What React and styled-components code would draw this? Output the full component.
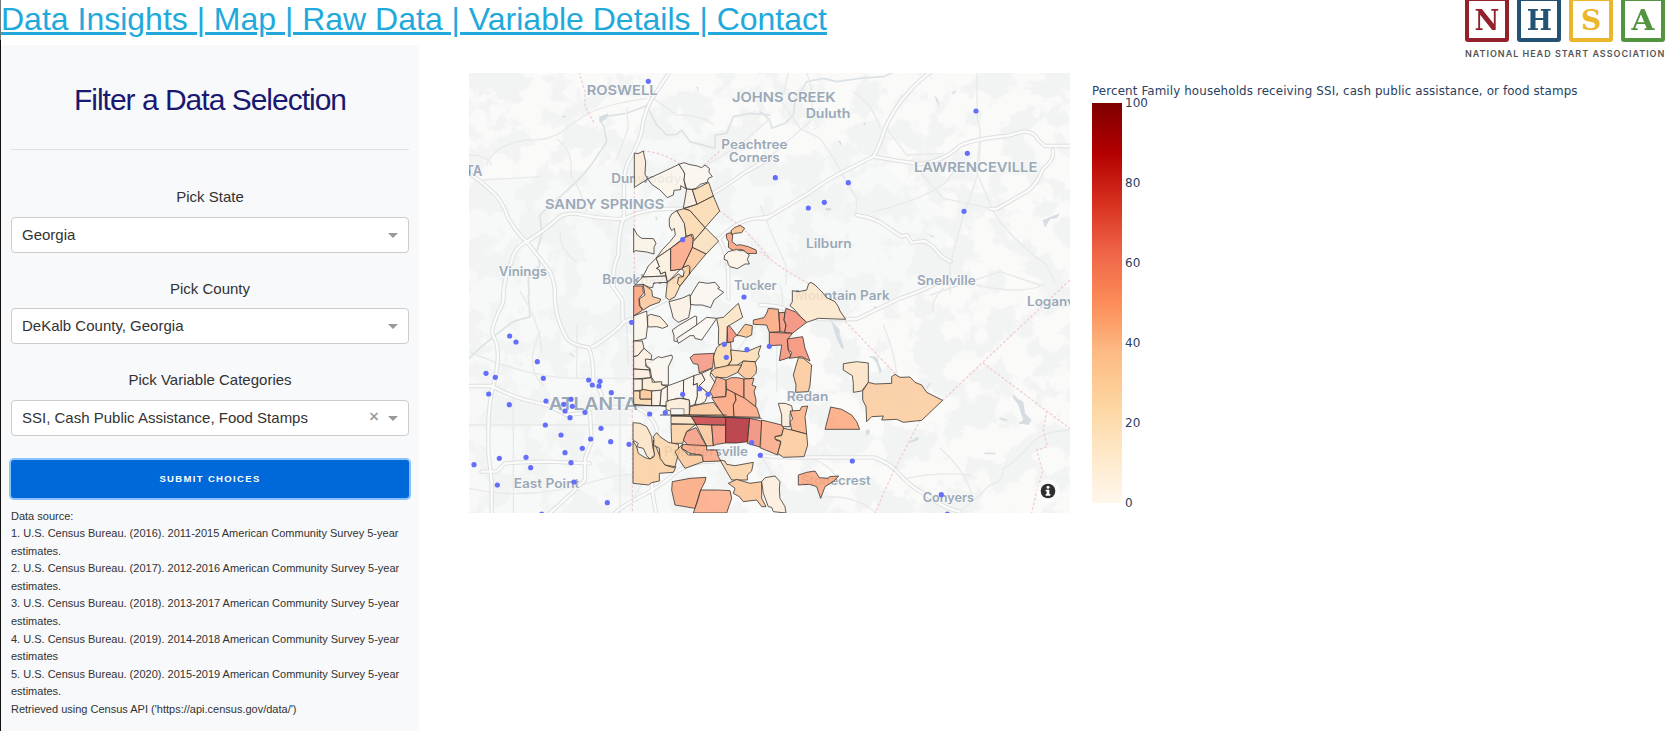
import React from "react";
import styled, { createGlobalStyle } from "styled-components";

const GlobalStyle = createGlobalStyle`
  * { box-sizing: border-box; }
  html, body { margin: 0; padding: 0; background: #fff; overflow: hidden; }
  body { font-family: "Liberation Sans", Arial, sans-serif; color: #323232; }
`;

const Page = styled.div`
  width: 1671px;
  height: 731px;
  display: flex;
  overflow: hidden;
`;
const Edge = styled.div`
  width: 1px;
  flex: none;
  background: linear-gradient(#777 0 40px, #111 40px);
`;
const Content = styled.div`
  flex: 1;
  display: flex;
  flex-direction: column;
`;
const Header = styled.header`
  height: 45px;
  flex: none;
  display: flex;
  justify-content: space-between;
  align-items: flex-start;
  padding-right: 6px;
`;
const Nav = styled.a`
  color: #22a9dc;
  font-size: 32px;
  line-height: 39px;
  white-space: pre;
  text-decoration: underline;
  text-decoration-thickness: 3px;
  text-underline-offset: 2px;
`;
const Brand = styled.div`
  width: 200px;
  display: flex;
  flex-direction: column;
`;
const Blocks = styled.div`
  display: flex;
  justify-content: space-between;
  height: 42px;
`;
const Block = styled.div`
  width: 44px;
  height: 42px;
  border: 4px solid ${(p) => p.$color};
  border-top-width: 1px;
  border-radius: 0 0 3px 3px;
  color: ${(p) => p.$color};
  font: bold 28px/39px "DejaVu Serif", serif;
  display: flex;
  justify-content: center;
`;
const Letter = styled.span`
  transform: scaleX(${(p) => p.$scale});
`;
const BrandName = styled.div`
  margin-top: 5px;
  font: 600 9px/13px Inter, sans-serif;
  letter-spacing: 0.98px;
  color: #555;
  white-space: nowrap;
`;
const Main = styled.main`
  display: flex;
  flex: 1;
  align-items: flex-start;
`;
const Sidebar = styled.aside`
  width: 418px;
  height: 686px;
  flex: none;
  background: #f8f9fb;
  padding: 0 10px;
`;
const Title = styled.h2`
  margin: 0;
  padding-top: 35px;
  height: 104px;
  font-size: 30px;
  line-height: 40px;
  font-weight: 400;
  letter-spacing: -1px;
  text-align: center;
  color: #191970;
`;
const Rule = styled.hr`
  margin: 0 0 36px;
  border: 0;
  border-top: 1px solid #dfe1e4;
`;
const Field = styled.div`
  height: ${(p) => p.$height}px;
`;
const Label = styled.div`
  height: ${(p) => p.$height}px;
  font-size: 15px;
  line-height: ${(p) => p.$line}px;
  text-align: center;
`;
const Select = styled.div`
  height: 36px;
  border: 1px solid #ccc;
  border-radius: 4px;
  background: #fff;
  padding: 0 10px;
  display: flex;
  align-items: center;
  gap: 9px;
  font-size: 15px;
  color: #333;
`;
const Value = styled.span`
  flex: 1;
  height: 34px;
  line-height: 33px;
  white-space: nowrap;
`;
const Clear = styled.span`
  font-size: 17px;
  line-height: 20px;
  color: #999;
  -webkit-text-stroke: 0.4px #999;
  transform: translateY(-1px);
`;
const Arrow = styled.span`
  border: 5px solid transparent;
  border-top-color: #999;
  border-bottom-width: 0;
`;
const Submit = styled.button`
  width: 100%;
  height: 38px;
  display: block;
  border: 0;
  border-radius: 3px;
  box-shadow: 0 0 0 2px #8cc2fb;
  background: #0069d9;
  color: #fff;
  font: 600 9.5px/38px "Liberation Sans", Arial, sans-serif;
  letter-spacing: 1.35px;
  padding: 0;
`;
const Sources = styled.div`
  margin-top: 9.5px;
  font-size: 11px;
  line-height: 17.6px;
`;
const MapBox = styled.div`
  margin: 28px 0 0 50px;
  width: 601px;
  height: 440px;
  flex: none;
  svg { display: block; }
`;
const Legend = styled.section`
  margin: 36px 0 0 22px;
  font: 12px/20px "DejaVu Sans", Verdana, sans-serif;
  color: #2a3f5f;
`;
const LegendTitle = styled.div`
  height: 22px;
  line-height: 20px;
  white-space: nowrap;
  font-size: 11.9px;
  letter-spacing: 0.11px;
`;
const Scale = styled.div`
  display: flex;
  gap: 3px;
`;
const Ramp = styled.div`
  width: 30px;
  height: 400px;
  background: linear-gradient(to top, #fff7ec, #fee8c8 12.5%, #fdd49e 25%, #fdbb84 37.5%, #fc8d59 50%, #ef6548 62.5%, #d7301f 75%, #b30000 87.5%, #7f0000);
`;
const Ticks = styled.div`
  height: 420px;
  margin-top: -10px;
  display: flex;
  flex-direction: column;
  justify-content: space-between;
`;

/* The map is drawn in thirds of a pixel, split in four tiles. */
const TILES = { nw: [0, 0], ne: [900, 0], sw: [0, 660], se: [900, 660], core: [480, 225] };
const shift = (t) => `translate(${TILES[t][0]} ${TILES[t][1]})`;

const TRACTS = {
  nw: [
    ["#fdebd6", "523,264 534,266 550,258 553,274 557,290 555,328 563,342 523,367"],
    ["#fcf4ea", "563,342 600,325 657,298 670,315 675,330 672,345 677,371 662,362 662,374 642,376 640,390 622,398 600,375 575,358"],
    ["#fcf6ef", "657,298 672,293 690,299 712,303 725,308 735,300 748,310 747,322 757,335 745,340 742,352 720,358 708,370 695,373 680,372 672,345 674,325"],
    ["#fbf0e3", "680,372 697,374 711,418 670,430"],
    ["#fbdcb2", "697,374 708,372 746,352 760,393 711,418"],
    ["#fbdab0", "711,418 760,393 779,438 735,488 710,460 690,437 672,431"],
    ["#fbd8ae", "672,431 690,437 710,460 735,488 703,528 698,508 678,514 673,478 650,437"],
  ],
  core: [
    ["#fcf0e0", "170,212 155,222 148,235 148,258 155,272 163,265 166,285 150,305 128,328 108,355 152,325 198,288 193,250"],
    ["#fbe0bd", "256,263 296,303 258,342 217,322 219,305"],
    ["#fbc698", "217,322 258,342 207,403 205,378 190,382 186,387"],
    ["#fcefdd", "108,355 152,325 152,392 182,387 142,427 136,396 122,402 118,390 109,385 118,380"],
    ["#fcf4e9", "108,355 118,380 109,385 118,390 122,402 136,396 137,408 68,411 85,378"],
    ["#fcf4ea", "68,411 137,408 142,427 101,429 98,443 86,441 69,433 44,435"],
    ["#fbdcb3", "142,427 175,402 188,410 205,378 210,400 180,438 165,470 148,480 137,472"],
    ["#fbd4a4", "186,387 190,382 205,376 210,380 208,402 180,438 172,430 176,412 190,410 192,395"],
    ["#fba682", "152,325 200,290 213,284 219,298 217,322 186,387 152,392"],
    ["#fba07a", "319,282 333,278 338,288 336,305 350,316 360,314 385,320 408,330 410,340 380,341 370,330 358,328 345,335 325,322 326,305 320,295"],
    ["#fbc08f", "333,272 343,263 360,256 374,265 365,278 345,280 336,284"],
    ["#fcf3e6", "325,335 350,328 358,332 372,332 388,345 382,358 388,372 375,372 352,386 330,380 325,374 322,362 312,358 314,346"],
    ["#fcf2e4", "41,265 52,285 65,295 100,296 108,310 102,322 102,342 80,336 45,332 41,337"],
  ],
  sw: [
    ["#fba17c", "521,3 548,3 550,25 537,40 538,62 548,75 521,93"],
    ["#fbc79c", "549,-3 575,15 578,35 602,42 598,52 570,62 550,75 540,62 538,42 555,30"],
    ["#fcf6f0", "717,-9 742,-5 765,-8 779,8 773,10 791,22 762,45 752,68 727,60 705,60 692,58 690,35 705,10"],
    ["#fcf1e4", "627,50 665,40 690,29 692,65 686,98 655,112 640,100"],
    ["#fcf4ea", "521,93 560,78 563,120 558,160 540,165 521,168"],
    ["#fdeeda", "563,120 563,92 572,88 600,95 612,108 624,123 608,130 590,125 565,126"],
    ["#fdeedd", "521,168 547,168 552,190 533,212 521,215"],
    ["#fdefdf", "521,215 533,212 552,190 575,210 572,232 558,236 557,244 575,255 521,252"],
    ["#fdeedd", "521,252 568,255 572,278 521,282"],
    ["#fdf0e2", "521,282 547,282 547,315 521,318"],
    ["#fcf6ef", "558,240 556,222 580,225 595,215 605,218 635,210 638,218 625,245 625,300 605,300 600,292 585,292 575,278 570,250"],
    ["#fdebd2", "547,315 547,282 575,278 577,292 605,290 605,300 620,303 600,318 575,318"],
    ["#fbdab0", "521,318 540,318 540,342 575,342 575,362 521,358"],
    ["#fbc594", "540,318 550,313 575,318 575,342 540,342"],
    ["#fcf2e5", "575,318 604,315 600,362 575,362"],
    ["#fcf4ea", "604,315 622,303 625,350 618,365 600,362"],
    ["#fcf5ec", "622,303 671,285 670,340 650,340 622,350"],
    ["#fcf6ef", "671,285 702,272 700,300 712,295 712,335 705,358 690,364 688,345 670,340"],
    ["#fdf1e3", "702,272 725,265 735,285 718,302 745,325 735,350 720,358 705,358 712,335 712,295 700,300"],
    ["#fcf3e6", "725,265 757,250 750,270 770,300 750,320 745,325 718,302 735,285"],
    ["#fdebd6", "618,350 630,345 660,340 688,345 688,390 635,392 632,378 618,374"],
    ["#fcf6ef", "637,135 655,122 705,93 710,95 710,120 662,155 650,170 642,168 642,152"],
    ["#fcf7f1", "650,160 710,120 740,97 770,100 755,122 725,165 705,160 702,152 690,152 675,162 655,175"],
    ["#fbe3c2", "770,100 790,97 835,55 848,97 802,125 800,175 785,180 775,178 776,130"],
    ["#f58c76", "802,125 808,122 830,150 820,160 820,170 803,172"],
    ["#fbc28f", "835,145 855,118 877,122 875,150 860,157 840,152 830,152"],
    ["#fbd8ab", "770,188 785,175 812,172 815,225 800,245 765,250 760,215"],
    ["#fbdcb3", "812,195 860,200 903,182 895,205 898,215 885,232 850,228 830,242 805,242 815,225"],
    ["#fbc495", "850,228 885,230 890,250 888,265 870,283 855,280 833,262"],
    ["#fbcb9d", "752,262 765,250 810,240 845,240 833,262 800,278 765,278"],
    ["#f69581", "690,218 702,208 762,205 758,248 718,264 714,238 700,236"],
    ["#fba985", "750,320 765,290 770,275 798,285 797,335 760,338"],
    ["#fba27b", "798,285 815,278 833,278 852,282 852,340 800,312"],
    ["#fbac88", "852,282 882,280 876,300 888,305 882,320 888,345 887,367 852,340"],
    ["#fba37c", "755,338 797,335 800,312 825,325 828,345 820,360 822,395 792,394"],
    ["#fba681", "825,325 855,340 890,367 900,397 822,395 820,360 828,345"],
    ["#fbc69a", "690,365 720,358 760,352 793,394 688,390"],
    ["#fbe0c0", "633,393 690,390 708,418 633,416"],
    ["#fbcfa2", "633,418 708,418 680,440 668,475 635,475"],
    ["#f59a80", "708,428 740,485 685,482 670,465 680,440"],
    ["#fbc79b", "708,418 755,420 760,482 740,483"],
    ["#f68f78", "755,420 797,420 797,474 770,478 760,482"],
    ["#cb4345", "695,394 797,397 797,420 708,418"],
    ["#b22c36", "797,397 869,400 862,470 830,474 797,474"],
    ["#f08a76", "869,400 905,408 903,487 862,475"],
    ["#fbcfa2", "519,468 530,485 535,505 555,518 570,522 582,515 580,465 598,510 615,540 640,548 648,545 640,562 598,565 598,588 575,593 565,600 519,595"],
    ["#fde3c4", "519,413 540,415 560,425 575,455 578,485 584,510 570,522 560,512 550,490 530,485 535,475 519,465"],
    ["#fbd5a9", "582,465 580,455 590,443 600,455 625,472 655,478 657,500 645,545 615,540 600,520 598,490 580,480"],
    ["#fbc798", "645,500 668,478 665,490 685,510 730,510 730,530 675,550 655,520"],
    ["#fba884", "668,478 740,482 740,495 770,495 775,515 782,528 730,530 725,510 690,505 665,490"],
    ["#fbd3a5", "780,525 795,528 800,538 825,542 880,532 875,558 862,570 862,585 815,585 800,560"],
    ["#fbc497", "805,595 830,583 870,595 905,590 905,640 918,665 905,665 890,645 850,650 838,635 820,625 825,610"],
    ["#fba67e", "637,590 690,580 738,577 735,590 722,615 705,670 645,660 635,615"],
    ["#fba985", "722,615 775,615 810,617 815,640 800,684 700,684 712,650"],
  ],
  se: [
    ["#fba67e", "-20,105 12,98 20,85 25,70 55,73 60,140 28,142 20,120 -20,118"],
    ["#f6967c", "57,83 75,82 72,105 78,120 74,142 60,140"],
    ["#f48a76", "75,82 78,70 105,80 140,112 97,145 74,142 78,120 72,105"],
    ["#fde6cb", "97,17 115,20 140,15 146,-4 153,-8 165,0 175,10 190,25 200,38 225,50 235,65 240,78 257,103 175,100 140,112 122,95 105,75 90,62 97,50"],
    ["#f59077", "28,142 97,145 82,165 85,195 95,215 75,222 58,227 65,180 28,182"],
    ["#f58e76", "82,162 128,155 135,190 150,228 125,215 88,220 95,202 85,195"],
    ["#fbc79a", "115,218 130,220 155,240 150,300 145,320 107,322 108,300 100,270"],
    ["#fde3c4", "250,236 290,230 325,234 325,292 305,318 280,322 280,295 277,272 250,255"],
    ["#fbcb9d", "308,318 325,292 345,297 395,295 395,275 405,268 420,277 450,276 465,292 485,300 500,322 548,346 485,406 430,412 410,403 365,405 370,393 335,395 320,410 318,365 308,345"],
    ["#fba67d", "195,433 205,395 212,366 245,373 275,390 290,410 299,433"],
    ["#fdebd6", "55,355 75,355 95,362 98,378 90,385 90,425 65,425 65,390"],
    ["#fbb085", "90,378 120,376 125,365 143,363 135,395 140,447 95,435 90,410 98,402"],
    ["#fba985", "5,405 65,420 72,430 65,450 45,455 48,465 62,470 53,510 0,488"],
    ["#fbc99a", "70,430 95,435 140,447 143,480 132,515 70,517 53,505 62,475 62,468 45,462 45,455 65,452"],
    ["#fdeedd", "5,590 15,578 45,573 60,590 58,612 60,640 75,665 78,684 40,680 35,667 25,665 10,625"],
    ["#fba67e", "115,570 140,562 165,558 178,578 205,580 208,575 236,573 222,588 195,605 182,640 170,605 148,598 115,600"],
  ],
};

const DOTS = {
  nw: [[565, 49], [668, 524], [22, 320]],
  ne: [[648, 138], [622, 265], [46, 338], [265, 353], [193, 412], [145, 429], [612, 439]],
  sw: [[515, 112], [149, 153], [168, 171], [232, 230], [78, 265], [106, 277], [250, 280], [86, 327], [148, 359],
    [386, 285], [397, 300], [420, 289], [417, 303], [454, 323], [258, 348], [333, 343], [311, 358], [337, 364], [315, 378],
    [375, 382], [330, 398], [256, 420], [303, 450], [423, 430], [392, 462], [452, 470], [507, 478], [367, 490], [315, 503],
    [333, 533], [198, 517], [212, 548], [118, 520], [42, 539], [112, 600], [342, 591], [442, 653], [245, 687], [569, 387],
    [616, 383], [668, 328], [719, 311], [744, 328], [793, 178], [861, 194], [799, 217], [852, 36], [875, 473], [901, 511], [928, 184]],
  se: [[277, 528], [544, 629], [562, 687]],
};

const PLACES = {
  nw: [["ROSWELL", 380, 91, 213, 41], ["JOHNS CREEK", 816, 110, 311, 41], ["Peachtree", 784, 251, 198, 38],
    ["Corners", 807, 291, 152, 38], ["Dunwoody", 454, 355, 210, 38], ["SANDY SPRINGS", 255, 432, 358, 41],
    ["Vinings", 116, 634, 145, 38], ["Brookhaven", 427, 656, 232, 38], ["Tucker", 822, 674, 128, 38], ["TA", 16, 332, 51, 42]],
  ne: [["Duluth", 137, 158, 134, 38], ["LAWRENCEVILLE", 462, 321, 370, 41], ["Lilburn", 138, 548, 137, 38], ["Snellville", 471, 660, 176, 38]],
  sw: [["ATLANTA", 266, 375, 268, 51], ["East Point", 161, 610, 197, 38], ["Panthersville", 612, 514, 252, 38]],
  se: [["Mountain Park", 105, 44, 284, 38], ["Loganville", 801, 63, 200, 38], ["Redan", 80, 349, 125, 38], ["Stonecrest", 122, 599, 210, 38], ["Conyers", 488, 652, 154, 38]],
};

const HIGHWAYS = {
  nw: ["M628,22 L590,80 Q552,130 545,200 Q530,250 505,290 Q490,320 492,380 V455 Q475,500 475,570 Q455,610 462,660",
    "M27,325 Q60,345 88,372 Q125,400 145,460 Q175,510 200,530 Q240,580 270,620 Q285,650 285,690",
    "M200,530 Q250,500 300,455 Q325,440 370,450 Q430,462 492,462 Q530,440 590,433 L670,430 Q780,380 850,325 L930,280",
    "M200,530 Q160,550 155,590 Q130,640 130,700", "M775,525 Q830,465 890,460 L930,455", "M775,520 Q805,560 805,640 V700"],
  ne: ["M0,460 H20 L150,382 Q200,345 250,320 L340,275 Q360,240 375,190 Q420,90 510,22", "M340,275 L410,287 480,297 Q550,290 600,242 Q640,222 740,213",
    "M740,213 L790,200 Q820,198 835,225 L855,243 H930", "M878,255 Q885,285 850,310 Q830,360 800,380 L710,432 H690", "M290,450 Q350,460 380,485 L425,515 440,510 455,533 495,528 520,545 Q545,580 572,590"],
  sw: ["M130,20 V50 Q90,130 98,150 Q125,190 105,280 Q85,350 85,430 V500 L95,590 V690", "M285,20 Q280,90 320,160 Q335,180 385,187 Q400,210 400,290 Q430,320 430,365 H440 L530,370 Q570,380 590,430 V500 Q560,560 590,690",
    "M395,187 Q430,170 480,125 Q490,105 520,102 Q560,70 640,35", "M455,0 L487,45 488,105", "M27,303 H95 Q145,330 190,343 L260,360 320,390 390,382 395,470 375,520 375,585 Q320,640 270,684",
    "M65,560 H110 L135,535 Q220,530 265,530 L390,535", "M465,684 Q490,660 560,625 Q620,590 650,560 Q690,530 760,530"],
  se: ["M0,60 Q55,60 80,75 M175,102 H290 L420,40 Q480,20 520,0", "M0,510 Q60,520 150,517 H340 Q390,530 430,580 Q460,610 500,630 Q550,670 600,680"],
};

const STREETS = {
  nw: ["M27,270 Q80,270 95,300 M80,300 Q100,240 200,225 Q280,230 330,180 L370,155 Q420,120 560,100", "M290,222 Q340,250 333,330 Q360,370 380,440", "M565,90 L650,150 Q730,150 760,180", "M70,345 L240,335", "M930,160 Q850,240 740,300", "M500,130 L505,190 470,280 M300,500 Q300,560 350,590"],
  ne: ["M85,22 L65,110 120,190 180,220 Q230,290 245,325 L290,400 288,450", "M130,0 Q170,80 150,170 L0,300", "M650,22 L652,160 Q670,210 650,340 L610,450 570,600 V680", "M660,210 650,320 700,440 Q740,510 860,600 L885,650", "M380,190 L440,270 550,265 M280,80 Q340,120 360,190 M480,320 L550,400 690,430", "M0,420 Q40,520 78,600 V660", "M510,690 L720,620 840,660", "M340,440 Q500,400 560,350 L600,290"],
  sw: ["M27,200 Q210,280 350,280 H520", "M350,120 V280 M240,140 Q190,250 250,300", "M180,20 Q240,110 245,200 M500,110 505,240", "M27,420 H520 M160,330 V684 M480,380 V684", "M27,610 Q200,650 400,590 T520,640", "M640,480 Q720,410 780,280 Q830,190 930,70"],
  se: ["M600,680 Q650,640 690,600 Q730,590 730,550 Q780,520 820,470 Q850,440 930,435", "M550,10 Q510,50 520,80 490,180 Q490,240 460,275 M400,400 Q340,430 348,500", "M60,0 Q80,60 50,180 V320", "M440,580 Q540,560 630,570 M540,490 Q610,550 635,625", "M370,120 Q410,220 410,280", "M0,510 Q30,550 50,600 M150,520 Q220,540 240,600 M350,684 Q270,620 170,640", "M650,0 Q780,30 850,0"],
};

const WATER = {
  nw: ["M560,122 L500,145 430,155 420,165 432,185 440,230 420,260 Q390,310 350,350 L240,450 245,510 230,560 240,600 205,640 207,690", "M560,122 L590,180 620,210 650,208 665,195 690,230 765,250 765,210 800,205 820,155 870,145 930,150"],
  ne: ["M0,140 Q35,160 35,190 L75,175 100,150 105,110 140,50 190,40 230,50 300,40 370,35 400,22"],
  sw: ["M27,220 Q90,160 160,110 L210,95 205,30", "M330,205 342,215"],
  se: ["M215,110 L235,135 240,160 250,190 M330,215 L350,220 360,255 M720,400 740,405 M760,330 L785,360 790,390 810,410 780,415", "M450,470 475,458 M675,505 H705 M320,435 V450 M500,310 510,295"],
};
const PONDS = {
  nw: ["417,155 445,145 440,160 420,175", "585,455 592,455 590,468", "708,65 714,66 716,78", "305,155 320,150 312,160"],
  ne: ["230,225 243,230 245,242", "523,93 532,100 540,130 530,110", "195,430 212,428 215,434 200,438", "505,510 522,512 520,518", "848,465 900,445 890,460 870,462 855,488", "575,83 592,75 580,88", "310,170 318,174 312,182"],
  se: ["215,112 240,135 235,150 252,185 244,190 228,155", "335,215 345,214 365,255 360,268 350,235", "755,333 790,350 795,385 815,405 805,420 775,415 790,405 775,360", "315,440 330,432 328,450", "340,62 355,68 345,72", "450,475 472,455 475,465", "720,397 740,405 735,408"],
};
const BORDERS = {
  nw: ["M357,22 L375,80 375,125 405,178", "M523,367 V690 M550,258 Q610,262 657,296 M732,300 L780,258 M779,438 L850,490 930,580"],
  ne: ["M0,560 L75,615 145,655"],
  sw: ["M517,168 V684"],
  se: ["M257,110 L405,265 M548,346 L665,235 930,-15 M670,235 L860,378 930,430 M860,378 L850,435 862,485 830,495 848,560 830,620 815,684 M480,406 L400,560 345,684"],
};

const Lines = ({ data, ...rest }) => (
  <g fill="none" strokeLinecap="round" strokeLinejoin="round" {...rest}>
    {Object.entries(data).map(([t, ds]) => (
      <g key={t} transform={shift(t)}>{ds.map((d) => <path key={d} d={d} />)}</g>
    ))}
  </g>
);

const CensusMap = () => (
  <svg width="601" height="440" viewBox="27 24 1803 1320">
    <defs>
      <filter id="land" x="0" y="0" width="100%" height="100%" colorInterpolationFilters="sRGB">
        <feTurbulence type="fractalNoise" baseFrequency="0.011" numOctaves="5" seed="8" />
        <feColorMatrix values="0 0 0 0 .949  0 0 0 0 .957  0 0 0 0 .953  12 0 0 0 -5.6" />
      </filter>
    </defs>
    <rect x="27" y="24" width="1803" height="1320" fill="#fafaf9" />
    <rect x="27" y="24" width="1803" height="1320" filter="url(#land)" />
    <g fill="#f2f4f4" opacity=".3">
      <path d="M27,345 L240,335 500,290 545,150 700,160 930,300 1200,240 1480,480 1400,680 1000,760 930,1200 600,1344 27,1344Z" />
    </g>
    <Lines data={WATER} stroke="#dce2e5" strokeWidth="5" />
    <g fill="#d5dde2">
      {Object.entries(PONDS).map(([t, ps]) => <g key={t} transform={shift(t)}>{ps.map((p) => <polygon key={p} points={p} />)}</g>)}
    </g>
    <Lines data={STREETS} stroke="#e8e9e9" strokeWidth="4" />
    <Lines data={HIGHWAYS} stroke="#dedfdf" strokeWidth="13" />
    <Lines data={HIGHWAYS} stroke="#fbfbfb" strokeWidth="7" />
    <Lines data={BORDERS} stroke="#f0cdd2" strokeWidth="4" strokeDasharray="5 9" />
    <g fontFamily="Inter, sans-serif" fontWeight="600" fill="#9aa8b6" stroke="#f8f9f9" strokeWidth="5" paintOrder="stroke" strokeLinejoin="round">
      {Object.entries(PLACES).map(([t, list]) => (
        <g key={t} transform={shift(t)}>
          {list.map(([name, x, y, w, size]) => (
            <text key={name} x={x} y={y} textLength={w} lengthAdjust="spacingAndGlyphs" fontSize={size}>{name}</text>
          ))}
        </g>
      ))}
    </g>
    <g stroke="#3a3632" strokeOpacity=".8" strokeWidth="3" strokeLinejoin="round" fillOpacity=".86">
      {Object.entries(TRACTS).map(([t, list]) => (
        <g key={t} transform={shift(t)}>{list.map(([fill, pts]) => <polygon key={pts} fill={fill} points={pts} />)}</g>
      ))}
      <g transform={shift("sw")} fill="none">
        <rect x="632" y="371" width="40" height="19" fill="#f5f6f6" strokeOpacity=".5" />
        <path d="M521,362 H620 M600,390 H800 M633,393 L905,400" />
      </g>
    </g>
    <g fill="#636efa">
      {Object.entries(DOTS).map(([t, list]) => (
        <g key={t} transform={shift(t)}>{list.map(([x, y]) => <circle key={`${x}-${y}`} cx={x} cy={y} r="7.8" />)}</g>
      ))}
    </g>
    <g transform="translate(1764 1278)">
      <circle r="35" fill="#fff" fillOpacity=".6" />
      <circle r="22" fill="#2f2f2f" />
      <circle cy="-11" r="4.5" fill="#fff" />
      <path d="M-7,-4 H4 V9 H7 V14 H-7 V9 H-4 V1 H-7Z" fill="#fff" />
    </g>
  </svg>
);

const Dropdown = ({ label, value, clearable, height, labelHeight = 31, labelLine = 24 }) => (
  <Field $height={height}>
    <Label $height={labelHeight} $line={labelLine}>{label}</Label>
    <Select>
      <Value>{value}</Value>
      {clearable && <Clear>×</Clear>}
      <Arrow />
    </Select>
  </Field>
);

const LOGO = [["N", "#93202a", 0.97], ["H", "#245272", 0.95], ["S", "#ebb62a", 1], ["A", "#529440", 1.05]];
const SOURCES = [
  "Data source:",
  "1. U.S. Census Bureau. (2016). 2011-2015 American Community Survey 5-year estimates.",
  "2. U.S. Census Bureau. (2017). 2012-2016 American Community Survey 5-year estimates.",
  "3. U.S. Census Bureau. (2018). 2013-2017 American Community Survey 5-year estimates.",
  "4. U.S. Census Bureau. (2019). 2014-2018 American Community Survey 5-year estimates",
  "5. U.S. Census Bureau. (2020). 2015-2019 American Community Survey 5-year estimates.",
  "Retrieved using Census API ('https://api.census.gov/data/')",
];

export default function App() {
  return (
    <Page>
      <GlobalStyle />
      <Edge />
      <Content>
        <Header>
          <Nav>Data Insights | Map | Raw Data | Variable Details | Contact</Nav>
          <Brand>
            <Blocks>
              {LOGO.map(([l, c, s]) => <Block key={l} $color={c}><Letter $scale={s}>{l}</Letter></Block>)}
            </Blocks>
            <BrandName>NATIONAL HEAD START ASSOCIATION</BrandName>
          </Brand>
        </Header>
        <Main>
          <Sidebar>
            <Title>Filter a Data Selection</Title>
            <Rule />
            <Dropdown label="Pick State" value="Georgia" height={91} labelLine={22} />
            <Dropdown label="Pick County" value="DeKalb County, Georgia" height={91} />
            <Dropdown label="Pick Variable Categories" value="SSI, Cash Public Assistance, Food Stamps" clearable height={92} labelHeight={32} />
            <Submit>SUBMIT CHOICES</Submit>
            <Sources>{SOURCES.map((s) => <div key={s}>{s}</div>)}</Sources>
          </Sidebar>
          <MapBox><CensusMap /></MapBox>
          <Legend>
            <LegendTitle>Percent Family households receiving SSI, cash public assistance, or food stamps</LegendTitle>
            <Scale>
              <Ramp />
              <Ticks>{[100, 80, 60, 40, 20, 0].map((n) => <span key={n}>{n}</span>)}</Ticks>
            </Scale>
          </Legend>
        </Main>
      </Content>
    </Page>
  );
}
